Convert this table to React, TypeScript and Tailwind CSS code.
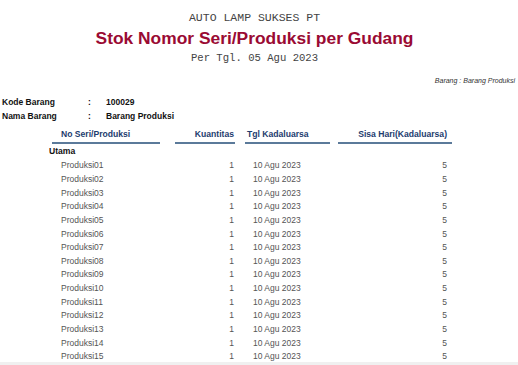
import React from 'react'

const rows = Array.from({ length: 15 }, (_, i) => ({
  serial: `Produksi${String(i + 1).padStart(2, '0')}`,
  qty: 1,
  expiry: '10 Agu 2023',
  daysLeft: 5,
}))

const mono = { fontFamily: '"Liberation Mono", "Courier New", monospace' }

export default function App() {
  return (
    <div
      className="h-[365px] w-[518px] flex flex-col bg-white overflow-hidden"
      style={{ fontFamily: '"Liberation Sans", Arial, sans-serif' }}
    >
      <div className="flex-1 overflow-hidden">
        {/* Report heading */}
        <div className="flex flex-col items-center pt-[11px] pr-[9px]">
          <div className="text-[11.5px] leading-[13px] text-[#444]" style={mono}>
            AUTO LAMP SUKSES PT
          </div>
          <div className="text-[17.4px] leading-[22px] font-bold text-[#9a0a33] mt-[3px]">
            Stok Nomor Seri/Produksi per Gudang
          </div>
          <div className="text-[10.6px] leading-[12px] text-[#444] mt-[3px]" style={mono}>
            Per Tgl. 05 Agu 2023
          </div>
        </div>
        <div className="flex justify-end pr-[3px] mt-[12px] text-[7px] leading-[9px] italic text-[#333]">
          Barang : Barang Produksi
        </div>

        {/* Item info */}
        <div className="mt-[11px] pl-[2px] text-[8.5px] leading-[13.5px] font-bold text-[#111]">
          <div className="flex">
            <span className="w-[86px]">Kode Barang</span>
            <span className="w-[18px]">:</span>
            <span>100029</span>
          </div>
          <div className="flex">
            <span className="w-[86px]">Nama Barang</span>
            <span className="w-[18px]">:</span>
            <span>Barang Produksi</span>
          </div>
        </div>

        {/* Table header */}
        <div className="flex mt-[5px] pl-[52px] text-[8.6px] leading-[12px] font-bold text-[#1d3c6e]">
          <div className="w-[108px] pl-[9px] pb-[2px] border-b-2 border-[#5b7a9a]">No Seri/Produksi</div>
          <div className="w-[60px] ml-[15px] text-right pr-[1px] pb-[2px] border-b-2 border-[#5b7a9a]">Kuantitas</div>
          <div className="w-[85px] ml-[10px] pl-[2px] pb-[2px] border-b-2 border-[#5b7a9a]">Tgl Kadaluarsa</div>
          <div className="w-[114px] ml-[8px] text-right pr-[5px] pb-[2px] border-b-2 border-[#5b7a9a]">Sisa Hari(Kadaluarsa)</div>
        </div>

        {/* Group */}
        <div className="mt-[1px] pl-[49px] text-[8.6px] leading-[13px] font-bold text-[#111]">Utama</div>

        <div className="mt-[1px] text-[8.5px] text-[#555]">
          {rows.map((r) => (
            <div key={r.serial} className="flex h-[13.64px] items-center pl-[52px]">
              <div className="w-[108px] pl-[9px]">{r.serial}</div>
              <div className="w-[60px] ml-[15px] text-right pr-[1px]">{r.qty}</div>
              <div className="w-[85px] ml-[10px] pl-[8px]">{r.expiry}</div>
              <div className="w-[114px] ml-[8px] text-right pr-[5px]">{r.daysLeft}</div>
            </div>
          ))}
        </div>
      </div>
      <div className="h-[3px] bg-[#f0f0f0]" />
    </div>
  )
}
